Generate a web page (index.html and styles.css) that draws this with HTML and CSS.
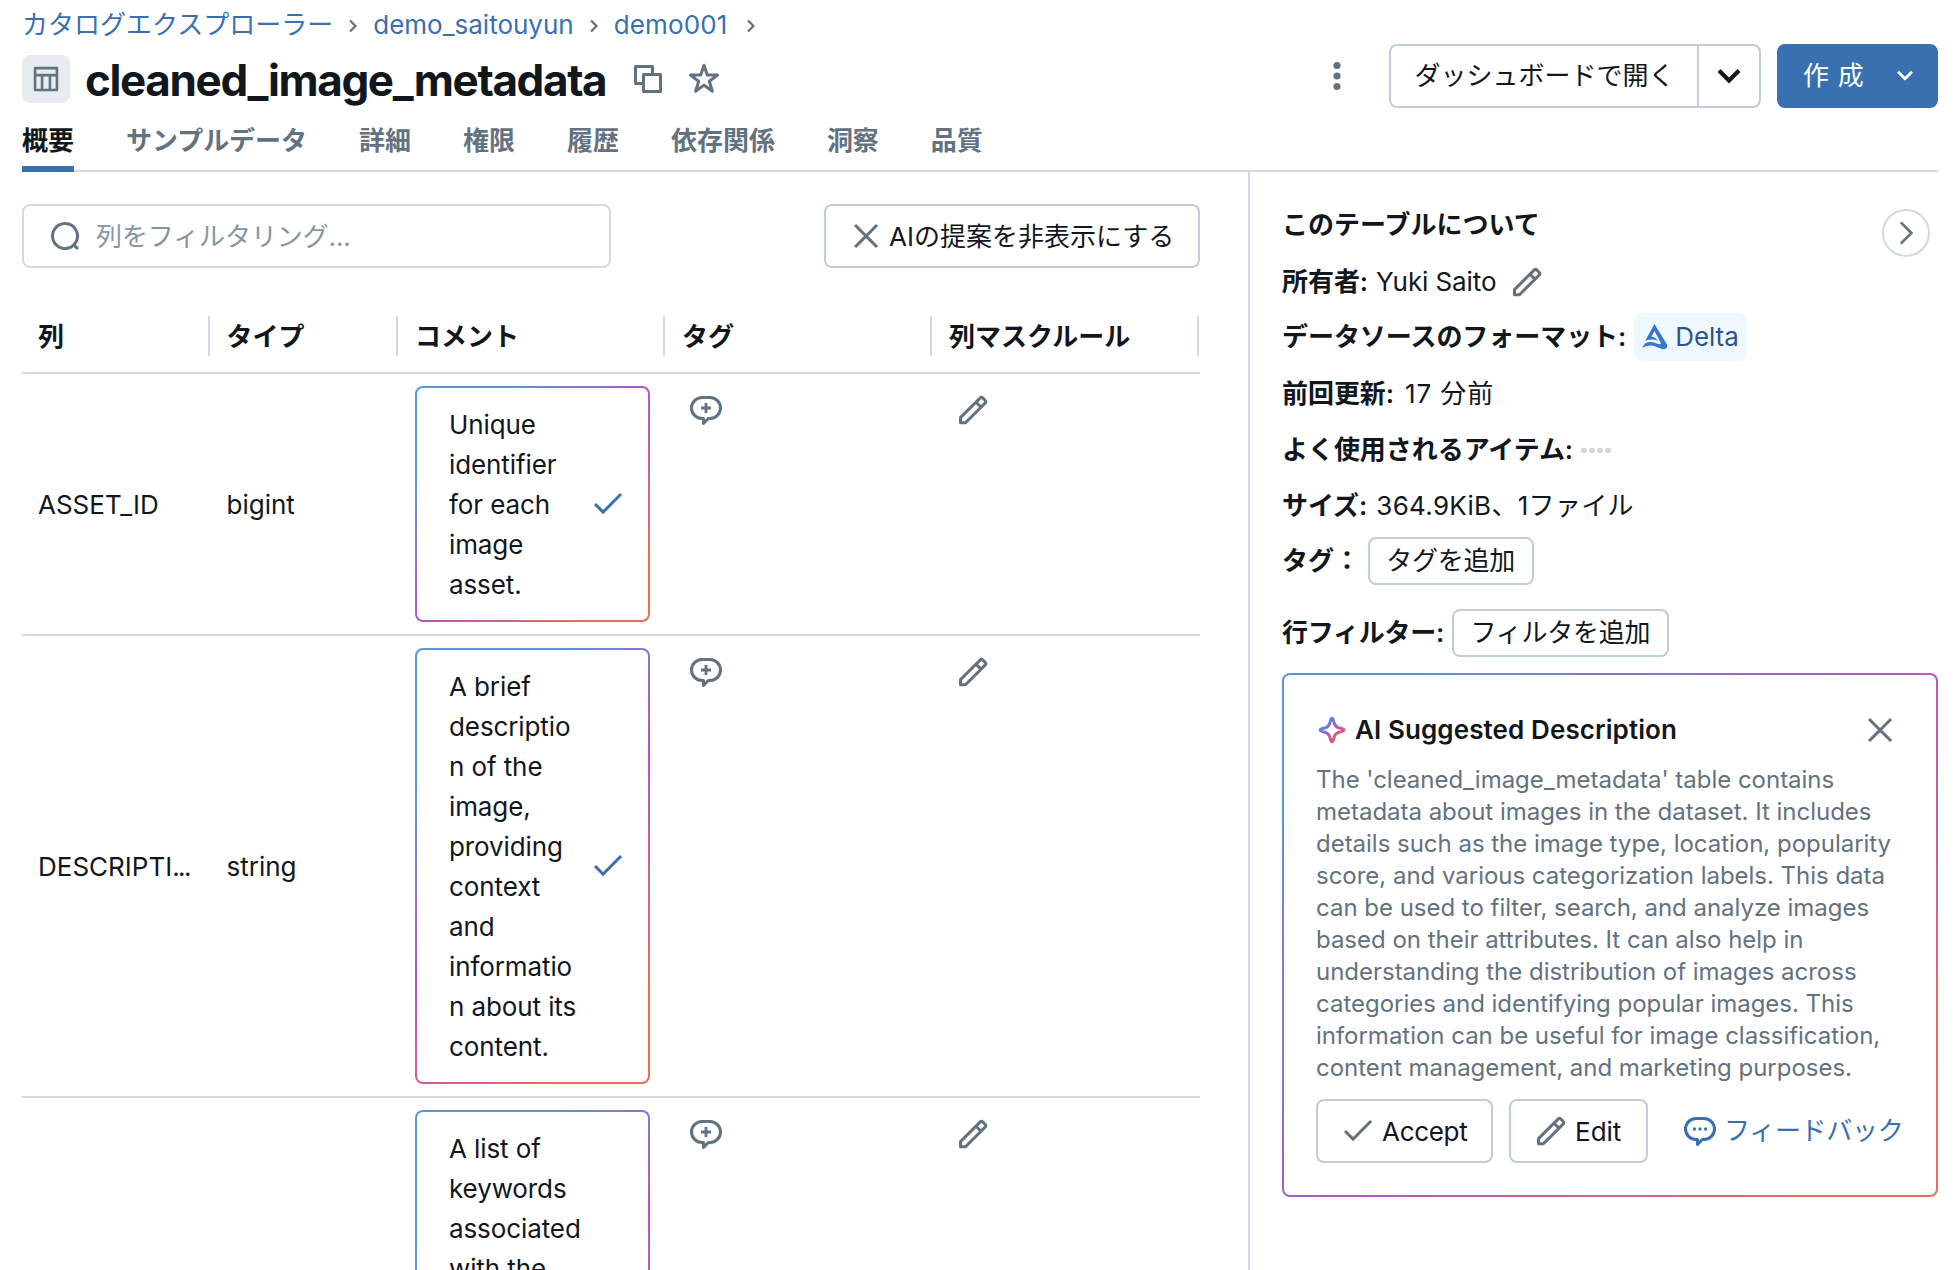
FILE: index.html
```html
<!DOCTYPE html>
<html lang="ja">
<head>
<meta charset="utf-8">
<title>cleaned_image_metadata</title>
<link rel="stylesheet" href="styles.css">
</head>
<body>
<svg class="sprite" width="0" height="0">
  <defs>
    <linearGradient id="ai" x1="0" y1="0" x2="1" y2="1"><stop offset="0.2" stop-color="#4a8fe0"/><stop offset="0.5" stop-color="#b455c8"/><stop offset="0.85" stop-color="#e8604c"/></linearGradient>
    <symbol id="pencil" viewBox="0 0 16 16"><path fill-rule="evenodd" d="M13.487 1.513a1.75 1.75 0 0 0-2.474 0L1.22 11.306a.75.75 0 0 0-.22.53v2.5c0 .414.336.75.75.75h2.5a.75.75 0 0 0 .53-.22l9.793-9.793a1.75 1.75 0 0 0 0-2.475l-1.086-1.085Zm-1.414 1.06a.25.25 0 0 1 .354 0l1.086 1.086a.25.25 0 0 1 0 .354L12 5.525l-1.44-1.44 1.513-1.511ZM9.5 5.146l-7 7v1.44h1.44l7-7-1.44-1.44Z"/></symbol>
    <symbol id="check" viewBox="0 0 16 16"><path d="m15.06 3.56-9.53 9.531L1 8.561 2.06 7.5l3.47 3.47L14 2.5l1.06 1.06Z"/></symbol>
    <symbol id="close" viewBox="0 0 16 16"><path d="M6.97 8.03 2 3.06 3.06 2l4.97 4.97L13 2l1.06 1.06-4.969 4.97 4.97 4.97L13 14.06 8.03 9.092l-4.97 4.97L2 13l4.97-4.97Z"/></symbol>
    <symbol id="bubble" viewBox="0 0 16 16"><path fill="none" stroke="currentColor" stroke-width="1.5" stroke-linejoin="round" d="M6 1.75h4a5.25 5.25 0 0 1 0 10.5H9.2L6.75 14.7v-2.45H6a5.25 5.25 0 0 1 0-10.5Z"/></symbol>
    <symbol id="chev" viewBox="0 0 16 16"><path fill="none" stroke="currentColor" stroke-width="1.3" d="M5.4 2.7 10.700 8l-5.300 5.300"/></symbol>
  </defs>
</svg>
<div class="page">
  <header class="head">
    <div class="head-left">
      <nav class="crumbs">
        <a>カタログエクスプローラー</a><svg class="sep" viewBox="0 0 8 12"><path d="m1.5 1.2 4.6 4.8-4.6 4.8"/></svg>
        <a>demo_saitouyun</a><svg class="sep" viewBox="0 0 8 12"><path d="m1.5 1.2 4.6 4.8-4.6 4.8"/></svg>
        <a class="schema">demo001</a><svg class="sep end" viewBox="0 0 8 12"><path d="m1.5 1.2 4.6 4.8-4.6 4.8"/></svg>
      </nav>
      <div class="title-row">
        <span class="badge"><svg width="28" height="28" viewBox="0 0 16 16"><path fill-rule="evenodd" d="M1.75 1a.75.75 0 0 0-.75.75v12.5c0 .414.336.75.75.75h12.5a.75.75 0 0 0 .75-.75V1.75a.75.75 0 0 0-.75-.75H1.75ZM2.5 2.5h11V5h-11V2.500ZM2.500 6.500H5v7H2.500v-7Zm4 0h3v7h-3v-7Zm4.500 0h2.500v7H11v-7Z"/></svg></span>
        <h1>cleaned_image_metadata</h1>
        <svg class="ic copy" viewBox="0 0 16 16"><path fill-rule="evenodd" d="M1.75 1a.75.75 0 0 0-.75.75v8.5c0 .414.336.75.75.75H5v3.250c0 .414.336.75.75.75h8.500a.75.75 0 0 0 .75-.75v-8.500a.75.75 0 0 0-.75-.75H11V1.750a.75.75 0 0 0-.75-.75h-8.500ZM9.500 5V2.500h-7v7H5V5.750A.75.75 0 0 1 5.750 5H9.500Zm-3 8.500v-7h7v7h-7Z"/></svg>
        <svg class="ic star" viewBox="0 0 16 16"><path fill="none" stroke="currentColor" stroke-width="1.5" stroke-linejoin="round" d="m8 1.100 1.650 4.950h5.150l-4.150 3.100 1.550 4.950L8 11.050 3.800 14.100l1.550-4.950L1.200 6.050h5.150Z"/></svg>
      </div>
    </div>
    <div class="actions">
      <svg class="kebab" viewBox="0 0 8 30"><circle cx="4" cy="4.500" r="3.600"/><circle cx="4" cy="15" r="3.600"/><circle cx="4" cy="25.500" r="3.600"/></svg>
      <div class="split"><span class="split-main">ダッシュボードで開く</span><span class="split-arrow"><svg width="24" height="16" viewBox="0 0 24 16"><path fill="none" stroke="currentColor" stroke-width="4.200" d="m2 2.500 10 10 10-10"/></svg></span></div>
      <div class="create"><span>作 成</span><svg width="18" height="12" viewBox="0 0 18 12"><path fill="none" stroke="currentColor" stroke-width="2.800" d="m2 1.800 7 7 7-7"/></svg></div>
    </div>
  </header>
  <nav class="tabs"><span class="on">概要</span><span>サンプルデータ</span><span>詳細</span><span>権限</span><span>履歴</span><span>依存関係</span><span>洞察</span><span>品質</span></nav>
  <div class="body">
    <main class="main">
      <div class="tools">
        <div class="filter"><svg class="ic" viewBox="0 0 16 16"><path fill-rule="evenodd" d="M8 1a7 7 0 1 0 4.390 12.453l1.550 1.550 1.060-1.060-1.550-1.550A7 7 0 0 0 8 1ZM2.500 8a5.500 5.500 0 1 1 11 0 5.500 5.500 0 0 1-11 0Z"/></svg><span>列をフィルタリング...</span></div>
        <div class="btn hide"><svg class="ic"><use href="#close"/></svg><span>AIの提案を非表示にする</span></div>
      </div>
      <div class="grid thead"><div>列</div><div>タイプ</div><div>コメント</div><div>タグ</div><div>列マスクルール</div></div>
      <div class="grid row">
        <div class="mid">ASSET_ID</div><div class="mid">bigint</div>
        <div class="cell"><div class="ai-box"><p>Unique<br>identifier<br>for each<br>image<br>asset.</p><svg class="ic blue"><use href="#check"/></svg></div></div>
        <div class="icell"><svg class="ic" viewBox="0 0 16 16"><use href="#bubble"/><path d="M7.300 4.500h1.400v1.800h1.800v1.400H8.700v1.800H7.300V7.700H5.500V6.300h1.800Z"/></svg></div>
        <div class="icell"><svg class="ic"><use href="#pencil"/></svg></div>
      </div>
      <div class="grid row">
        <div class="mid">DESCRIPTI<span class="ell">...</span></div><div class="mid">string</div>
        <div class="cell"><div class="ai-box"><p>A brief<br>descriptio<br>n of the<br>image,<br>providing<br>context<br>and<br>informatio<br>n about its<br>content.</p><svg class="ic blue"><use href="#check"/></svg></div></div>
        <div class="icell"><svg class="ic" viewBox="0 0 16 16"><use href="#bubble"/><path d="M7.300 4.500h1.400v1.800h1.800v1.400H8.700v1.800H7.300V7.700H5.500V6.300h1.800Z"/></svg></div>
        <div class="icell"><svg class="ic"><use href="#pencil"/></svg></div>
      </div>
      <div class="grid row">
        <div class="mid"></div><div class="mid"></div>
        <div class="cell"><div class="ai-box tall"><p>A list of<br>keywords<br>associated<br>with the</p></div></div>
        <div class="icell"><svg class="ic" viewBox="0 0 16 16"><use href="#bubble"/><path d="M7.300 4.500h1.400v1.800h1.800v1.400H8.700v1.800H7.300V7.700H5.500V6.300h1.800Z"/></svg></div>
        <div class="icell"><svg class="ic"><use href="#pencil"/></svg></div>
      </div>
    </main>
    <aside class="side">
      <div class="side-head"><h2>このテーブルについて</h2><span class="round"><svg width="32" height="32"><use href="#chev"/></svg></span></div>
      <div class="info owner"><b>所有者:</b><span>Yuki Saito</span><svg class="ic"><use href="#pencil"/></svg></div>
      <div class="info format"><b>データソースのフォーマット:</b><span class="pill"><svg width="26" height="26" viewBox="0 0 26 26"><path fill="#3a76cc" d="M12.500 0 25 20.500c1.200 3.300-1.500 5.300-5 4.500-4-1-7-3.500-10.500-3.500-3.500 0-6 1-9.500 2.200l3-4.200c4-2 7.500-1.800 10.500-.5 3.500 1.500 5.600 1.700 5.200-.3L12.500 7l-3 5.500c2 .5 4.500 1.500 6.500 4-4-1.500-8-1.500-12.700 0Z"/></svg>Delta</span></div>
      <div class="info"><b>前回更新:</b><span class="ago">17 分前</span></div>
      <div class="info"><b>よく使用されるアイテム:</b><span class="dots"><i></i><i></i><i></i><i></i></span></div>
      <div class="info"><b>サイズ:</b><span class="size">364.9KiB、1ファイル</span></div>
      <div class="info tags"><b>タグ：</b><span class="btn small">タグを追加</span></div>
      <div class="info last"><b>行フィルター:</b><span class="btn small">フィルタを追加</span></div>
      <section class="ai-card">
        <div class="ai-title"><svg width="28" height="28" viewBox="0 0 28 28"><path fill="none" stroke="url(#ai)" stroke-width="3" stroke-linejoin="round" d="M14 2.200c1 0 1.300 1 1.700 3.200.7 4 2.900 6.200 6.900 6.900 2.200.4 3.200.7 3.200 1.700s-1 1.300-3.200 1.700c-4 .7-6.200 2.900-6.900 6.900-.4 2.200-.7 3.200-1.700 3.200s-1.300-1-1.700-3.200c-.7-4-2.900-6.200-6.900-6.900-2.200-.4-3.200-.7-3.200-1.700s1-1.300 3.200-1.700c4-.7 6.200-2.900 6.900-6.900.4-2.200.7-3.200 1.700-3.200Z"/></svg><h3>AI Suggested Description</h3><svg class="ic"><use href="#close"/></svg></div>
        <p>The 'cleaned_image_metadata' table contains<br>metadata about images in the dataset. It includes<br>details such as the image type, location, popularity<br>score, and various categorization labels. This data<br>can be used to filter, search, and analyze images<br>based on their attributes. It can also help in<br>understanding the distribution of images across<br>categories and identifying popular images. This<br>information can be useful for image classification,<br>content management, and marketing purposes.</p>
        <div class="ai-actions">
          <span class="btn accept"><svg class="ic"><use href="#check"/></svg><span>Accept</span></span>
          <span class="btn edit"><svg class="ic"><use href="#pencil"/></svg><span>Edit</span></span>
          <span class="feedback"><svg class="ic blue" viewBox="0 0 16 16"><use href="#bubble"/><circle cx="5.200" cy="7" r=".85"/><circle cx="8" cy="7" r=".85"/><circle cx="10.800" cy="7" r=".85"/></svg>フィードバック</span>
        </div>
      </section>
    </aside>
  </div>
</div>
</body>
</html>
```
FILE: styles.css
```css
* { box-sizing: border-box; }
body { margin: 0; background: #fff; color: #11171c; font: 26px/40px Inter, "Noto Sans CJK JP", sans-serif; }
h1, h2, h3, p { margin: 0; }
svg { display: block; flex: none; fill: currentColor; }
.sprite { position: absolute; }
.page { width: 1958px; height: 1270px; overflow: hidden; display: flex; flex-direction: column; white-space: nowrap; }
.ic { width: 32px; height: 32px; color: #62727f; }
.blue { color: #3970b0; }

.head { display: flex; justify-content: space-between; height: 110px; padding: 0 20px 0 22px; }
.crumbs { display: flex; align-items: center; height: 50px; color: #3970b0; }
.schema { letter-spacing: 0.15px; }
.sep { width: 10px; height: 14px; margin: 2px 15px 0; fill: none; stroke: #62727f; stroke-width: 1.9; }
.sep.end { margin-left: 18px; }
.title-row { display: flex; align-items: center; height: 58px; }
.badge { width: 48px; height: 48px; border-radius: 8px; background: #e8ecf0; color: #62727f; display: flex; align-items: center; justify-content: center; }
h1 { margin-left: 15px; padding-top: 2px; width: 523px; font-size: 44px; font-weight: 700; letter-spacing: -1.36px; }
.copy { margin-left: 24px; }
.star { margin-left: 24px; }
.actions { display: flex; align-items: center; height: 64px; margin-top: 44px; }
.kebab { width: 8px; height: 30px; margin-right: 48px; color: #62727f; }
.split { display: flex; width: 372px; height: 64px; border: 2px solid #c0cdd8; border-radius: 8px; }
.split-main { width: 308px; padding-left: 1px; border-right: 2px solid #c0cdd8; text-align: center; line-height: 60px; }
.split-arrow { flex: 1; display: flex; align-items: center; justify-content: center; }
.create { display: flex; align-items: center; justify-content: space-between; width: 161px; height: 64px; margin-left: 16px; padding: 0 24px 0 26px; border-radius: 8px; background: #3970b0; color: #fff; line-height: 64px; word-spacing: 1.5px; }

.tabs { display: flex; gap: 52px; height: 62px; margin: 0 20px 0 22px; border-bottom: 2px solid #d1d9e1; color: #62727f; font-weight: 600; line-height: 61px; letter-spacing: -0.02px; }
.tabs span { height: 62px; }
.tabs .on { color: #11171c; border-bottom: 6px solid #3970b0; }

.body { display: flex; flex: 1; min-height: 0; }
.main { width: 1248px; padding: 32px 48px 0 22px; }
.tools { display: flex; justify-content: space-between; }
.btn { display: flex; align-items: center; height: 64px; border: 2px solid #c0cdd8; border-radius: 8px; }
.filter { display: flex; align-items: center; width: 589px; height: 64px; padding-left: 25px; border: 2px solid #d1d9e1; border-radius: 8px; color: #8396a5; }
.filter span { margin-left: 15px; padding-top: 1px; letter-spacing: -0.1px; }
.hide { width: 376px; padding-left: 24px; }
.hide span { padding-top: 1px; }
.grid { display: grid; grid-template-columns: 188.5px 188.5px 267px 267px 267px; }
.thead { height: 106px; padding-top: 48px; border-bottom: 2px solid #d1d9e1; font-weight: 600; }
.thead div { height: 40px; padding-left: 16px; margin-right: 1px; border-right: 2px solid #d1d9e1; line-height: 42px; }
.row { border-bottom: 2px solid #d1d9e1; }
.mid { display: flex; align-items: center; padding: 2px 0 0 16px; }
.ell { letter-spacing: -1.6px; }
.cell { padding: 12px 16px; }
.ai-box { display: flex; align-items: center; justify-content: space-between; padding: 16px 24px 16px 32px; border: 2px solid transparent; border-radius: 8px; background: linear-gradient(#fff, #fff) padding-box, linear-gradient(135deg, #5a97d6 20%, #b455c8 50%, #e2705a 85%) border-box; }
.ai-box p { padding-top: 1px; margin-bottom: -1px; letter-spacing: -0.1px; }
.tall { height: 436px; align-items: flex-start; }
.icell { padding: 20px 24px; }

.side { flex: 1; padding: 0 20px 0 32px; border-left: 2px solid #d1d9e1; }
.side-head { display: flex; justify-content: space-between; height: 82px; padding: 31px 8px 0 0; }
h2 { font-size: 26px; font-weight: 600; line-height: 43px; }
.round { width: 48px; height: 48px; margin-top: 6px; border: 2px solid #d1d9e1; border-radius: 50%; color: #62727f; display: flex; align-items: center; justify-content: center; }
.info { display: flex; align-items: center; height: 56px; }
.info b { font-weight: 600; margin-right: 8px; letter-spacing: -0.05px; }
.owner span { letter-spacing: -0.1px; }
.owner .ic { margin-left: 15px; }
.format { padding-bottom: 2px; }
.pill { display: flex; align-items: center; gap: 7px; height: 48px; padding: 0 8px; border-radius: 8px; background: #f0f8ff; color: #2c5488; letter-spacing: -0.1px; }
.ago { margin-left: 3px; letter-spacing: 0.9px; }
.size { margin-left: 1px; letter-spacing: 0.3px; }
.dots { display: flex; gap: 2px; }
.dots i { width: 6px; height: 5px; border-radius: 2px; background: #d3d7db; }
.tags { padding-bottom: 2px; }
.small { height: 48px; padding: 0 16.5px; letter-spacing: -0.25px; }
.last { height: 48px; margin: 19px 0 16px; }
.last b { letter-spacing: -0.25px; }
.ai-card { height: 524px; padding: 31px 32px; border: 2px solid transparent; border-radius: 8px; background: linear-gradient(#fff, #fff) padding-box, linear-gradient(135deg, #5a97d6 10%, #b455c8 50%, #e2705a 90%) border-box; }
.ai-title { display: flex; align-items: center; height: 48px; padding: 0 8px 0 2px; }
.ai-title h3 { flex: 1; margin-left: 9px; font-size: 26px; font-weight: 600; letter-spacing: 0.1px; }
.ai-card p { margin-top: 10px; font-size: 24px; line-height: 32px; letter-spacing: -0.02px; color: #62727f; }
.ai-actions { display: flex; align-items: center; margin-top: 15px; }
.btn .ic { margin-right: 8px; }
.hide .ic { margin-right: 7px; }
.accept { width: 177px; padding-left: 24px; letter-spacing: -0.3px; }
.accept span, .edit span { padding-top: 2px; }
.edit { width: 139px; padding-left: 24px; margin-left: 16px; }
.feedback { display: flex; align-items: center; gap: 8px; margin-left: 36px; color: #3970b0; letter-spacing: -0.3px; line-height: 38px; }
```
